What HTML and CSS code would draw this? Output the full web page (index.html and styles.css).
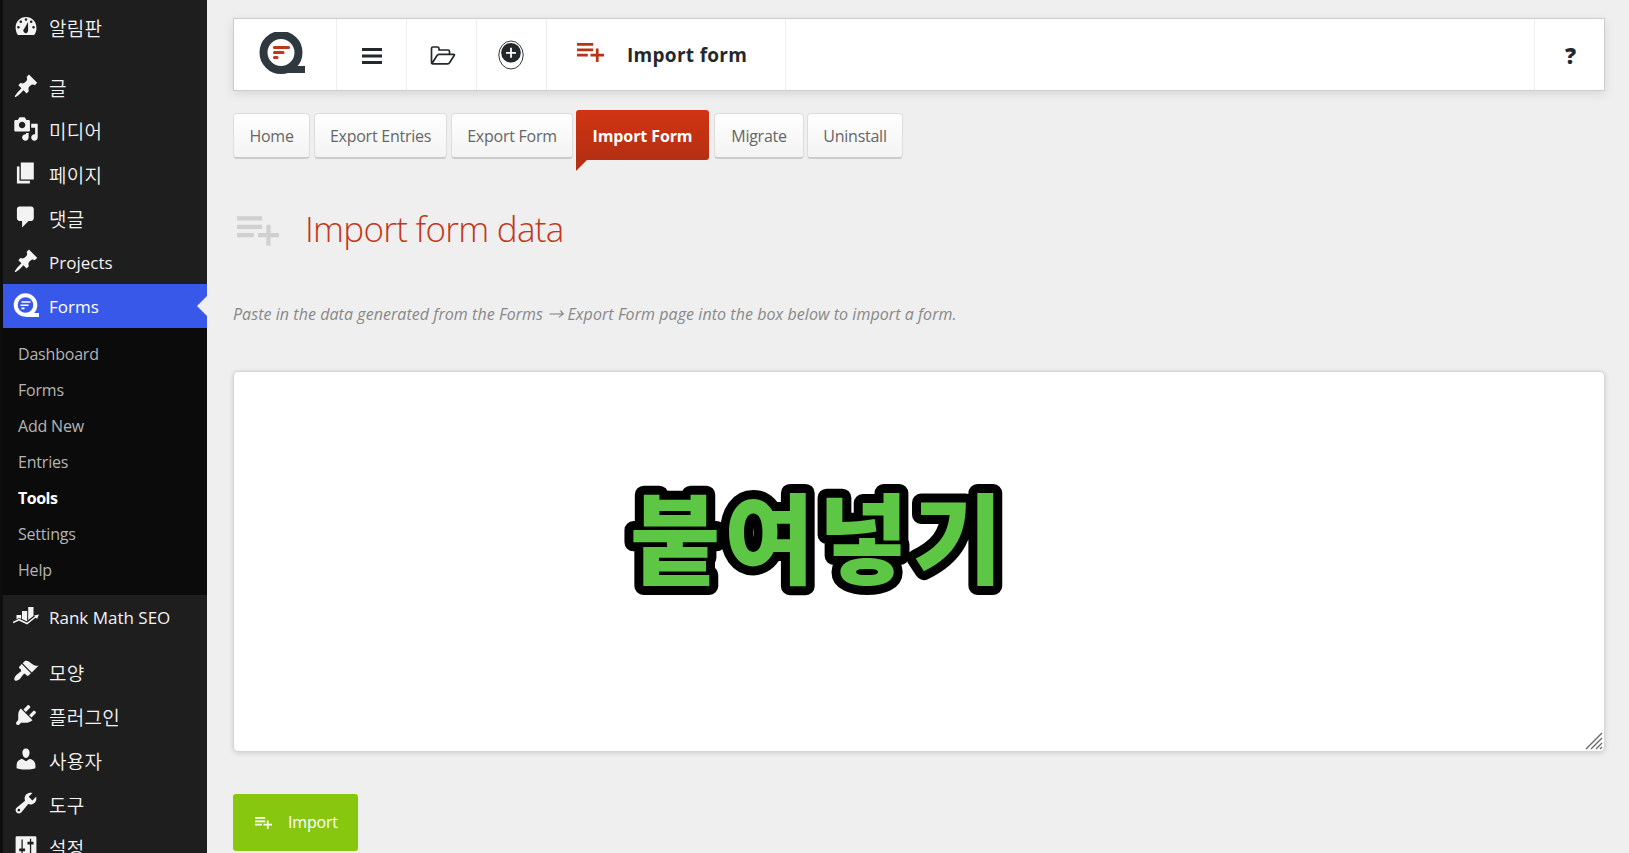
FILE: index.html
```html
<!DOCTYPE html>
<html lang="ko">
<head>
    <meta charset="UTF-8">
    <meta name="viewport" content="width=device-width, initial-scale=1.0">
    <title>Import form</title>
    <link rel="stylesheet" href="styles.css">
</head>
<body>
    <svg class="sprite" aria-hidden="true">
        <symbol id="i-pin" viewBox="0 0 20 20"><path d="M10.44 3.02l1.82-1.82 6.36 6.35-1.83 1.82c-1.05-.68-2.48-.57-3.41.36l-.75.75c-.92.93-1.04 2.35-.35 3.41l-1.83 1.82-2.41-2.41-2.8 2.79c-.42.42-3.38 2.71-3.8 2.29s1.86-3.39 2.28-3.81l2.79-2.79L4.1 9.36l1.83-1.82c1.05.69 2.48.57 3.4-.36l.75-.75c.93-.92 1.05-2.35.36-3.41z"/></symbol>
        <symbol id="i-list-add" viewBox="2 6 20 14"><path d="M14 10H2v2h12v-2zm0-4H2v2h12V6zm4 8v-4h-2v4h-4v2h4v4h2v-4h4v-2h-4zM2 16h8v-2H2v2z"/></symbol>
    </svg>

    <nav class="sidebar">
        <a class="menu-item" href="#">
            <svg class="menu-icon" viewBox="0 0 20 20"><path fill-rule="evenodd" d="M3.76 17h12.48A7.96 7.96 0 0 0 18 11c0-4.42-3.58-8-8-8s-8 3.58-8 8c0 2.300.66 4.500 1.760 6zM10 4a1 1 0 1 1 0 2 1 1 0 0 1 0-2zM6 5.700a1 1 0 1 1 0 2 1 1 0 0 1 0-2zm8 0a1 1 0 1 1 0 2 1 1 0 0 1 0-2zM4.200 10a1 1 0 1 1 0 2 1 1 0 0 1 0-2zm11.600 0a1 1 0 1 1 0 2 1 1 0 0 1 0-2zM8.630 12.050L11.600 7v6.500c0 1.100-.7 2-1.700 2s-2-.9-2-2c0-.57.34-1.080.73-1.450z"/></svg>
            <span>알림판</span>
        </a>
        <div class="separator"></div>
        <a class="menu-item" href="#">
            <svg class="menu-icon"><use href="#i-pin"/></svg>
            <span>글</span>
        </a>
        <a class="menu-item" href="#">
            <svg class="menu-icon" viewBox="0 0 20 20"><path d="M13 11V4c0-.55-.45-1-1-1h-1.670L9 1H5L3.670 3H2c-.55 0-1 .45-1 1v7c0 .55.45 1 1 1h10c.55 0 1-.45 1-1zM7 4.500c1.380 0 2.500 1.120 2.500 2.500S8.380 9.500 7 9.500 4.500 8.380 4.500 7 5.620 4.500 7 4.500zM14 6h5v10.500c0 1.380-1.120 2.500-2.500 2.500S14 17.880 14 16.500s1.120-2.500 2.500-2.500c.17 0 .34.02.5.05V9h-3V6zm-4 8.050V13h2v3.500c0 1.380-1.120 2.500-2.500 2.500S7 17.880 7 16.500 8.120 14 9.500 14c.17 0 .34.02.5.05z"/></svg>
            <span>미디어</span>
        </a>
        <a class="menu-item" href="#">
            <svg class="menu-icon" viewBox="0 0 20 20"><path d="M6 15V2h10v13H6zm-1 1h8v2H3V5h2v11z"/></svg>
            <span>페이지</span>
        </a>
        <a class="menu-item" href="#">
            <svg class="menu-icon" viewBox="0 0 20 20"><path d="M5 2h9c1.100 0 2 .9 2 2v7c0 1.100-.9 2-2 2h-2l-5 5v-5H5c-1.100 0-2-.9-2-2V4c0-1.100.9-2 2-2z"/></svg>
            <span>댓글</span>
        </a>
        <a class="menu-item latin" href="#">
            <svg class="menu-icon"><use href="#i-pin"/></svg>
            <span>Projects</span>
        </a>
        <a class="menu-item latin current" href="#">
            <svg class="menu-icon" viewBox="0 0 26 26"><circle cx="12.500" cy="13" r="9.800" fill="none" stroke="currentColor" stroke-width="4"/><path d="M13 21h13v4H13zM8.500 9.200h9v1.600h-9zm-1 3.200h8V14h-8zm1 3.200h3v1.600h-3z"/></svg>
            <span>Forms</span>
        </a>
        <div class="submenu">
            <a href="#">Dashboard</a>
            <a href="#">Forms</a>
            <a href="#">Add New</a>
            <a href="#">Entries</a>
            <a href="#" class="active">Tools</a>
            <a href="#">Settings</a>
            <a href="#">Help</a>
        </div>
        <a class="menu-item latin" href="#">
            <svg class="menu-icon" viewBox="0 0 26 26"><path d="M3.500 13h4.700v4l-2.200-1-2.500 1.200zM9 9h5.200v10.500L9 17zM15.200 5h5.300v9l-5.300 4z"/><path d="M0 20.500l6-2.800 8 3.800L23 14.500" fill="none" stroke="currentColor" stroke-width="1.500"/><path d="M21 13.500l5-1-2 4.500z"/></svg>
            <span>Rank Math SEO</span>
        </a>
        <div class="separator small"></div>
        <a class="menu-item" href="#">
            <svg class="menu-icon" viewBox="0 0 20 20"><path d="M14.480 11.060L7.410 3.990l1.500-1.500c.5-.56 2.300-.47 3.510.32 1.210.8 1.430 1.280 2.910 2.100 1.180.64 2.450 1.260 4.450.85zm-.71.71L6.700 4.700 4.930 6.470c-.39.39-.39 1.020 0 1.410l1.060 1.060c.39.39.39 1.030 0 1.420-.6.6-1.430 1.110-2.210 1.690-.35.26-.7.53-1.010.84C1.430 14.230.4 16.080 1.400 17.070c.99 1 2.840-.03 4.180-1.360.31-.31.58-.66.85-1.020.57-.78 1.080-1.610 1.690-2.210.39-.39 1.020-.39 1.410 0l1.060 1.060c.39.39 1.020.39 1.410 0z"/></svg>
            <span>모양</span>
        </a>
        <a class="menu-item" href="#">
            <svg class="menu-icon" viewBox="0 0 20 20"><path d="M13.110 4.360L9.870 7.600 8 5.730l3.240-3.240c.35-.34 1.050-.2 1.560.32.52.51.66 1.210.31 1.550zm-8 1.770l.91-1.120 9.010 9.010-1.190.84c-.71.71-2.630 1.160-3.820 1.160H6.140L4.900 17.260c-.59.59-1.540.59-2.120 0-.59-.58-.59-1.530 0-2.120l1.240-1.240v-3.880c0-1.130.4-3.190 1.090-3.890zm7.260 3.970l3.240-3.240c.34-.35 1.040-.21 1.550.31.52.51.66 1.210.31 1.550l-3.240 3.250z"/></svg>
            <span>플러그인</span>
        </a>
        <a class="menu-item" href="#">
            <svg class="menu-icon" viewBox="0 0 20 20"><path d="M10 9.250c-2.270 0-2.730-3.440-2.730-3.440C7 4.020 7.820 2 9.970 2c2.160 0 2.980 2.020 2.710 3.810 0 0-.41 3.440-2.680 3.440zm0 2.570L12.720 10c2.390 0 4.520 2.330 4.520 4.530v2.490s-3.650 1.130-7.240 1.130c-3.650 0-7.240-1.130-7.240-1.130v-2.490c0-2.250 1.940-4.480 4.470-4.480z"/></svg>
            <span>사용자</span>
        </a>
        <a class="menu-item" href="#">
            <svg class="menu-icon" viewBox="0 0 20 20"><path d="M16.680 9.770c-1.340 1.340-3.300 1.670-4.950.99l-5.410 6.520c-.99.99-2.590.99-3.580 0s-.99-2.590 0-3.570l6.520-5.420c-.68-1.650-.35-3.610.99-4.950 1.280-1.280 3.120-1.620 4.720-1.060l-2.890 2.890 2.820 2.820 2.860-2.870c.53 1.580.18 3.390-1.080 4.650zM3.810 16.210c.4.39 1.040.39 1.430 0 .4-.4.4-1.040 0-1.430-.39-.4-1.030-.4-1.430 0-.39.39-.39 1.030 0 1.430z"/></svg>
            <span>도구</span>
        </a>
        <a class="menu-item" href="#">
            <svg class="menu-icon" viewBox="0 0 20 20"><path fill-rule="evenodd" d="M3 2.500h14q1 0 1 1V17q0 1-1 1H3q-1 0-1-1V3.500q0-1 1-1zM6.500 5v7H4.800v2h1.700v2.500h1V14h1.800v-2H7.500V5zM13 4.500v2.300h-1.900v2H13v7.700h1V8.800h1.800v-2H14V4.500z"/></svg>
            <span>설정</span>
        </a>
    </nav>

    <main class="content">
        <header class="toolbar">
            <a class="tool logo" href="#">
                <svg width="46" height="42" viewBox="0 0 46 42">
                    <circle cx="22" cy="20.500" r="17.500" fill="#fff" stroke="#2f383e" stroke-width="8"/>
                    <path d="M22 34h24v7H22z" fill="#2f383e"/>
                    <path d="M15.500 15.500h14M15.500 20.500h8.500M15.500 25.500h2.500" stroke="#c3361a" stroke-width="3.200" stroke-linecap="round"/>
                </svg>
            </a>
            <a class="tool" href="#">
                <svg width="20" height="16" viewBox="0 0 20 16"><path d="M0 0h20v3H0zm0 6.500h20v3H0zM0 13h20v3H0z" fill="#23282d"/></svg>
            </a>
            <a class="tool folder" href="#">
                <svg width="26" height="19" viewBox="0 0 26 19"><path d="M1.500 16.500V2.500Q1.500 1 3 1h4.500Q9 1 9 2.500V4h9q1.500 0 1.500 1.500V8M2 17.500l5-8Q7.600 8.300 9 8.300h14.500q1.500 0 .7 1.200l-4.500 7q-.8 1.300-2 1.300H2.700q-1.200 0-1.200-1.300" fill="none" stroke="#23282d" stroke-width="1.700"/></svg>
            </a>
            <a class="tool add" href="#">
                <svg width="26" height="30" viewBox="0 0 26 30"><ellipse cx="13" cy="15" rx="12.200" ry="14" fill="#fff" stroke="#33383d"/><circle cx="13" cy="12.800" r="9.800" fill="#23282d"/><path d="M8 12.800h10M13 7.800v10" stroke="#fff" stroke-width="1.800"/></svg>
            </a>
            <div class="tool title">
                <svg class="title-icon"><use href="#i-list-add"/></svg>
                <span>Import form</span>
            </div>
            <a class="tool help" href="#">?</a>
        </header>

        <div class="tabs">
            <a class="tab home" href="#">Home</a>
            <a class="tab entries" href="#">Export Entries</a>
            <a class="tab export" href="#">Export Form</a>
            <a class="tab selected" href="#">Import Form</a>
            <a class="tab migrate" href="#">Migrate</a>
            <a class="tab uninstall" href="#">Uninstall</a>
        </div>

        <h1 class="heading">
            <svg class="heading-icon"><use href="#i-list-add"/></svg>
            <span>Import form data</span>
        </h1>

        <p class="description">Paste in the data generated from the Forms → Export Form page into the box below to import a form.</p>

        <div class="paste-box">
            <svg class="paste-label" width="440" height="180" viewBox="0 0 440 180">
                <text x="16" y="120">붙여넣기</text>
            </svg>
            <svg class="grip" width="18" height="18" viewBox="0 0 18 18"><path d="M1 17L17 1M6 17L17 6M11 17l6-6M15 17l2-2" stroke="#666" stroke-width="1.300"/></svg>
        </div>

        <button class="import-btn">
            <svg class="btn-icon"><use href="#i-list-add"/></svg>
            <span>Import</span>
        </button>
    </main>
</body>
</html>
```
FILE: styles.css
```css
* {
    box-sizing: border-box;
}

body {
    margin: 0;
    height: 853px;
    overflow: hidden;
    display: flex;
    background: #efefef;
    font-family: 'Open Sans', 'Noto Sans CJK KR', sans-serif;
    font-size: 16px;
}

a {
    text-decoration: none;
    color: inherit;
}

svg {
    fill: currentColor;
    flex-shrink: 0;
}

.sprite {
    position: absolute;
    width: 0;
    height: 0;
}

/* admin menu */
.sidebar {
    width: 207px;
    height: 853px;
    flex-shrink: 0;
    padding-top: 6px;
    overflow: hidden;
    background: #1e1e1e;
    border-left: 3px solid #0e0e0e;
    color: #f3f3f3;
}

.menu-item {
    display: flex;
    align-items: center;
    height: 43.75px;
    padding-left: 10px;
    font-size: 19px;
    letter-spacing: 0.3px;
    font-weight: 350;
}

.menu-item span {
    padding-top: 1px;
}

.menu-item.latin {
    font-size: 17px;
    letter-spacing: 0;
    font-weight: 400;
}

.menu-icon {
    width: 26px;
    height: 26px;
    margin: -3px 10px 0 0;
}

.separator {
    height: 15.5px;
}

.separator.small {
    height: 12.5px;
}

.current {
    position: relative;
    background: #3858e9;
    color: #fff;
}

.current .menu-icon {
    margin-top: -2px;
}

.current::after {
    content: '';
    position: absolute;
    right: 0;
    top: 12px;
    border: 10px solid transparent;
    border-left: 0;
    border-right-color: #efefef;
}

.submenu {
    height: 267px;
    padding: 8px 0 7px 15px;
    background: #0b0b0b;
}

.submenu a {
    display: block;
    line-height: 36px;
    font-size: 16px;
    letter-spacing: -0.2px;
    color: #b4b4b4;
}

.submenu .active {
    color: #fff;
    font-weight: 700;
    letter-spacing: -0.5px;
}

/* page */
.content {
    flex: 1;
    padding: 18px 24px 0 26px;
}

.toolbar {
    display: flex;
    height: 73px;
    background: #fff;
    border: 1px solid #ccc;
    box-shadow: 0 3px 10px rgba(0, 0, 0, 0.1);
    color: #23282d;
}

.tool {
    display: flex;
    align-items: center;
    justify-content: center;
    width: 70px;
    padding-top: 2px;
    border-right: 1px solid #eee;
}

.tool.logo {
    width: 103px;
    padding: 0 7px 3px 0;
}

.tool.folder {
    padding: 1px 0 0 2px;
}

.tool.add {
    padding: 0 1px 0 0;
}

.tool.title {
    width: 239px;
    justify-content: flex-start;
    padding: 0 0 0 30px;
    font-size: 19px;
    font-weight: 700;
    letter-spacing: 0.3px;
}

.title-icon {
    width: 27px;
    height: 19px;
    margin: -5px 23px 0 0;
    color: #b93415;
}

.tool.help {
    width: 70px;
    margin-left: auto;
    padding: 0 0 0 2px;
    border-left: 1px solid #eee;
    border-right: 0;
    font-size: 22px;
    font-weight: 800;
}

.tabs {
    display: flex;
    gap: 4px;
    margin-top: 22px;
}

.tab {
    height: 46px;
    line-height: 44px;
    text-align: center;
    white-space: nowrap;
    font-size: 16px;
    letter-spacing: -0.25px;
    color: #666;
    background: linear-gradient(#fff, #f3f3f3);
    border: 1px solid #ddd;
    border-bottom: 2px solid #ccc;
    border-radius: 4px;
}

.home {
    width: 77px;
}

.entries {
    width: 133px;
}

.export {
    width: 122px;
}

.migrate {
    width: 90px;
}

.uninstall {
    width: 96px;
    margin-left: -1px;
}

.selected {
    position: relative;
    width: 133px;
    height: 50px;
    margin: -3px 1px 0 -1px;
    line-height: 52px;
    border: 0;
    font-weight: 700;
    letter-spacing: -0.1px;
    color: #fff;
    background: linear-gradient(#d13413, #b52f12);
    border-radius: 3px 3px 3px 0;
}

.selected::after {
    content: '';
    position: absolute;
    left: 0;
    top: 50px;
    border-top: 11px solid #b52f12;
    border-right: 11px solid transparent;
}

.heading {
    display: flex;
    align-items: center;
    height: 60px;
    margin: 38px 0 0;
    padding-left: 4px;
    font-size: 35px;
    font-weight: 300;
    letter-spacing: -0.7px;
    color: #c3361a;
}

.heading-icon {
    width: 42px;
    height: 30px;
    margin: 5px 26px 0 0;
    color: #d0d0d0;
}

.description {
    margin: 42px 0 0;
    line-height: 28px;
    font-size: 16px;
    font-style: italic;
    letter-spacing: 0.06px;
    color: #888;
    white-space: nowrap;
}

.paste-box {
    position: relative;
    display: flex;
    height: 381px;
    margin-top: 43px;
    padding: 84px 0 0 380px;
    background: #fff;
    border: 1px solid #d5d5d5;
    border-radius: 5px;
    box-shadow: 0 1px 5px rgba(0, 0, 0, 0.15);
}

.paste-label {
    font-family: 'Noto Sans CJK KR', sans-serif;
    font-size: 98px;
    font-weight: 900;
    letter-spacing: 4px;
    fill: #5dc644;
    stroke: #000;
    stroke-width: 18px;
    stroke-linejoin: round;
    paint-order: stroke;
}

.grip {
    position: absolute;
    right: 1px;
    bottom: 1px;
}

.import-btn {
    display: flex;
    align-items: center;
    width: 125px;
    height: 57px;
    margin-top: 42px;
    padding: 0 0 2px 22px;
    border: 0;
    border-radius: 3px;
    background: #88c710;
    color: #fff;
    font-family: inherit;
    font-size: 16px;
    letter-spacing: -0.2px;
}

.btn-icon {
    width: 17px;
    height: 12px;
    margin: 2px 16px 0 0;
}
```
